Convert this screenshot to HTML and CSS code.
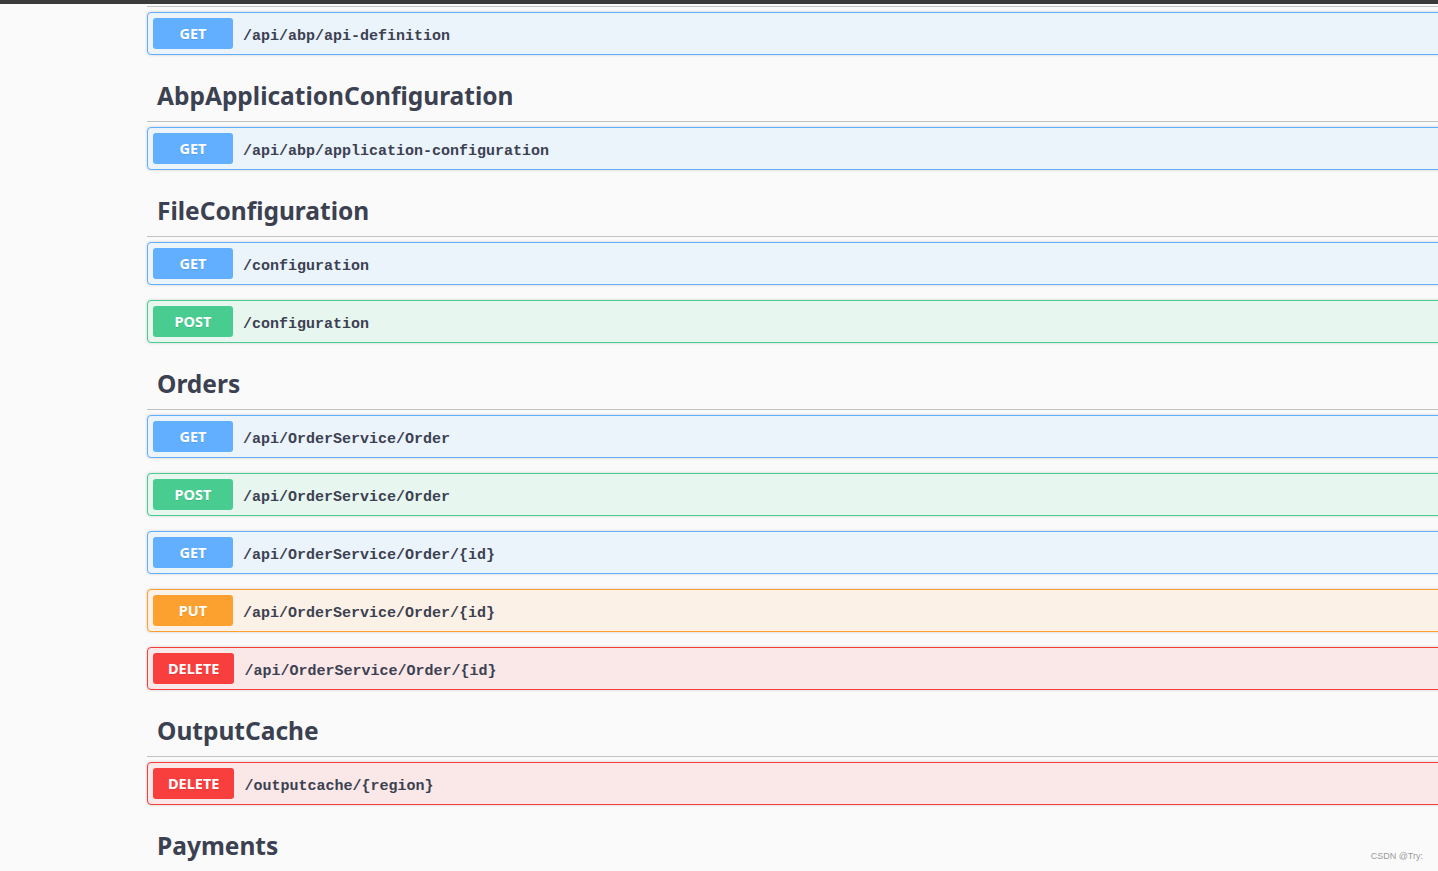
FILE: index.html
```html
<!DOCTYPE html>
<html>
<head>
<meta charset="utf-8">
<link rel="stylesheet" href="styles.css">
</head>
<body>
<div class="topbar"></div>
<div class="wrap">
  <div class="tag-end"></div>
  <div class="opblock get"><span class="method">GET</span><span class="path">/api/abp/api-definition</span></div>

  <h3 class="tag">AbpApplicationConfiguration</h3>
  <div class="opblock get"><span class="method">GET</span><span class="path">/api/abp/application-configuration</span></div>

  <h3 class="tag">FileConfiguration</h3>
  <div class="opblock get"><span class="method">GET</span><span class="path">/configuration</span></div>
  <div class="opblock post"><span class="method">POST</span><span class="path">/configuration</span></div>

  <h3 class="tag">Orders</h3>
  <div class="opblock get"><span class="method">GET</span><span class="path">/api/OrderService/Order</span></div>
  <div class="opblock post"><span class="method">POST</span><span class="path">/api/OrderService/Order</span></div>
  <div class="opblock get"><span class="method">GET</span><span class="path">/api/OrderService/Order/{id}</span></div>
  <div class="opblock put"><span class="method">PUT</span><span class="path">/api/OrderService/Order/{id}</span></div>
  <div class="opblock delete"><span class="method">DELETE</span><span class="path">/api/OrderService/Order/{id}</span></div>

  <h3 class="tag">OutputCache</h3>
  <div class="opblock delete"><span class="method">DELETE</span><span class="path">/outputcache/{region}</span></div>

  <h3 class="tag">Payments</h3>
</div>
<div class="watermark">CSDN @Try:</div>
</body>
</html>
```

FILE: styles.css
```css
html, body {
  margin: 0;
  padding: 0;
  background: #fafafa;
  overflow: hidden;
  height: 871px;
}
body {
  font-family: "Noto Sans", "Open Sans", sans-serif;
  color: #3b4151;
  position: relative;
}
.topbar {
  height: 4px;
  background: #3a3a3a;
}
.wrap {
  margin-left: 147px;
  width: 1320px;
}
.tag-end {
  height: 2px;
  border-bottom: 1px solid rgba(59, 65, 81, 0.3);
  margin-bottom: 5px;
}
.tag {
  margin: 0 0 5px;
  padding: 10px 20px 10px 10px;
  font-size: 24.5px;
  line-height: 31px;
  font-weight: 700;
  color: #3b4151;
  border-bottom: 1px solid rgba(59, 65, 81, 0.3);
}
.opblock {
  display: flex;
  align-items: center;
  margin: 0 0 15px;
  padding: 5px;
  border: 1px solid;
  border-radius: 4px;
  box-shadow: 0 0 3px rgba(0, 0, 0, 0.19);
}
.method {
  min-width: 80px;
  height: 31px;
  line-height: 31px;
  padding: 0 15px;
  box-sizing: border-box;
  border-radius: 3px;
  color: #fff;
  font-size: 14.5px;
  font-weight: 700;
  text-align: center;
  text-shadow: 0 1px 0 rgba(0, 0, 0, 0.1);
}
.path {
  margin-left: 10px;
  padding-top: 6px;
  font-family: "Liberation Mono", "Courier New", monospace;
  font-size: 15px;
  font-weight: 700;
  color: #3b4151;
}
.get { background: #ebf3fb; border-color: #61affe; }
.get .method { background: #61affe; }
.post { background: #e8f6f0; border-color: #49cc90; }
.post .method { background: #49cc90; }
.put { background: #fbf1e6; border-color: #fca130; }
.put .method { background: #fca130; }
.delete { background: #fae7e7; border-color: #f93e3e; }
.delete .method { background: #f93e3e; }
.watermark {
  position: absolute;
  right: 15px;
  top: 851px;
  font-family: "Liberation Sans", Arial, sans-serif;
  font-size: 9px;
  color: #9a9a9a;
}
```
